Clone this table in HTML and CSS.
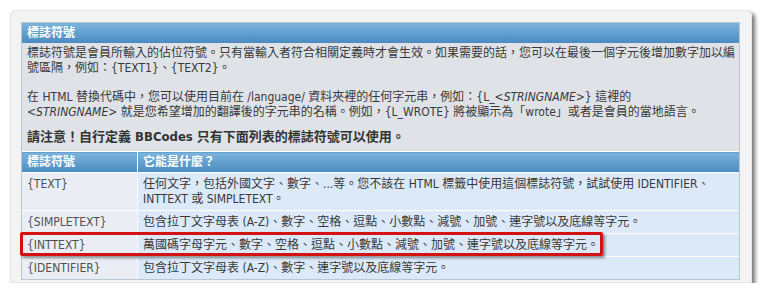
FILE: index.html
```html
<!DOCTYPE html>
<html lang="zh-Hant">
<head>
<meta charset="utf-8">
<title>標誌符號</title>
<link rel="stylesheet" href="styles.css">
</head>
<body>
<div class="panel">
  <div class="box">
    <div class="box-head">標誌符號</div>
    <div class="box-body">
      <p>標誌符號是會員所輸入的佔位符號。只有當輸入者符合相關定義時才會生效。如果需要的話，您可以在最後一個字元後增加數字加以編<br>號區隔，例如：{TEXT1}、{TEXT2}。</p>
      <p>在 HTML 替換代碼中，您可以使用目前在 /language/ 資料夾裡的任何字元串，例如：{L_<em>&lt;STRINGNAME&gt;</em>} 這裡的<br><em>&lt;STRINGNAME&gt;</em> 就是您希望增加的翻譯後的字元串的名稱。例如，{L_WROTE} 將被顯示為「wrote」或者是會員的當地語言。</p>
      <p class="note">請注意！自行定義 BBCodes 只有下面列表的標誌符號可以使用。</p>
    </div>
    <table class="tokens">
      <thead>
        <tr><th class="c1">標誌符號</th><th class="c2">它能是什麼？</th></tr>
      </thead>
      <tbody>
        <tr><td class="c1">{TEXT}</td><td class="c2">任何文字，包括外國文字、數字、...等。您不該在 HTML 標籤中使用這個標誌符號，試試使用 IDENTIFIER、<br>INTTEXT 或 SIMPLETEXT。</td></tr>
        <tr><td class="c1">{SIMPLETEXT}</td><td class="c2">包含拉丁文字母表 (A-Z)、數字、空格、逗點、小數點、減號、加號、連字號以及底線等字元。</td></tr>
        <tr><td class="c1">{INTTEXT}</td><td class="c2">萬國碼字母字元、數字、空格、逗點、小數點、減號、加號、連字號以及底線等字元。</td></tr>
        <tr><td class="c1">{IDENTIFIER}</td><td class="c2">包含拉丁文字母表 (A-Z)、數字、連字號以及底線等字元。</td></tr>
      </tbody>
    </table>
  </div>
  <div class="highlight"></div>
</div>
</body>
</html>
```
FILE: styles.css
```css
html, body {
  margin: 0;
  padding: 0;
  background: #ffffff;
}
body {
  font-family: "DejaVu Sans Condensed", "Noto Sans CJK TC", sans-serif;
  font-size: 12px;
  color: #383838;
}
.panel {
  position: relative;
  box-sizing: border-box;
  width: 742px;
  height: 273px;
  margin: 10px 0 0 10px;
  padding: 11px 11px 0 10px;
  background: #f3f3f3;
  border: 1px solid #e6e6e6;
  border-radius: 5px 5px 0 0;
  box-shadow: 3px 3px 4px rgba(0, 0, 0, 0.55);
  overflow: hidden;
}
.box {
  width: 717px;
  border: 1px solid #b9c7d3;
  background: #dfe3e8;
}
.box-head {
  height: 20px;
  line-height: 20px;
  padding: 0 5px;
  color: #ffffff;
  font-weight: bold;
  background: linear-gradient(#7db5dc, #4a8bc1);
}
.box-body {
  padding: 3px 3px 6px 5px;
  line-height: 15px;
  white-space: nowrap;
}
.box-body p {
  margin: 0 0 14px 0;
}
.box-body p + p {
  margin-bottom: 9px;
}
.box-body em {
  font-style: italic;
}
.box-body .note {
  margin: 0;
  font-size: 13px;
  line-height: 16px;
  font-weight: bold;
  color: #333333;
}
.tokens {
  width: 100%;
  border-collapse: collapse;
  line-height: 15px;
}
.tokens th {
  height: 20px;
  padding: 0 5px;
  text-align: left;
  color: #ffffff;
  font-weight: bold;
  background: linear-gradient(#7db5dc, #4a8bc1);
  border-top: 1px solid #ffffff;
}
.tokens .c1 {
  width: 105px;
}
.tokens .c2 {
  border-left: 1px solid #ffffff;
}
.tokens td {
  padding: 4px 5px 3px 5px;
  vertical-align: top;
  border-top: 1px solid #ffffff;
}
.tokens td.c1 {
  background: #eaeef4;
  color: #505050;
}
.tokens td.c2 {
  background: #dce9f9;
}
.highlight {
  position: absolute;
  left: 9px;
  top: 221px;
  width: 583px;
  height: 24px;
  box-sizing: border-box;
  border: 3px solid #d51212;
  border-radius: 2px;
  box-shadow: 2px 2px 3px rgba(0, 0, 0, 0.45);
}
```
